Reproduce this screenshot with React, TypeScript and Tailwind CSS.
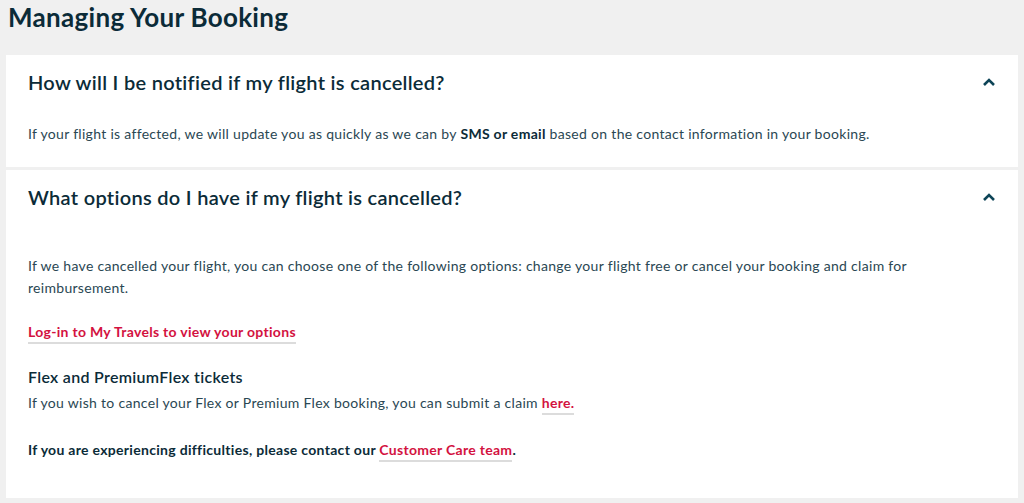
const Chevron = () => (
  <svg width="12" height="8" viewBox="0 0 12 8" className="shrink-0">
    <path d="M1 7 L6 2 L11 7" fill="none" stroke="#0d4457" strokeWidth="2.6" strokeLinejoin="miter" />
  </svg>
)

const Link = ({ children }: { children: React.ReactNode }) => (
  <a href="#" className="text-[#d3123f] font-bold border-b-2 border-[#dcdcdc] pb-[2px]">
    {children}
  </a>
)

export default function App() {
  return (
    <div
      className="min-h-[503px] bg-[#f0f0f0] pb-1 text-[#2a4753] tracking-[0.3px]"
      style={{ fontFamily: "Lato, 'Open Sans', sans-serif" }}
    >
      <h1 className="pl-2 pt-[1px] text-[26px] leading-[32px] font-bold text-[#0b2b38]">Managing Your Booking</h1>

      <div className="mx-[6px] mt-[22px] flex flex-col gap-[3px]">
        {/* question 1 */}
        <section className="bg-white px-[22px] pt-[13px] pb-[23px]">
          <div className="flex items-center justify-between pr-[1px]">
            <h2 className="text-[20px] leading-[28px] font-semibold text-[#0b2b38]">
              How will I be notified if my flight is cancelled?
            </h2>
            <Chevron />
          </div>
          <p className="mt-[28px] text-[14px] leading-[20px]">
            If your flight is affected, we will update you as quickly as we can by{" "}
            <strong className="font-bold text-[#0b2b38]">SMS or email</strong> based on the contact information in your
            booking.
          </p>
        </section>

        {/* question 2 */}
        <section className="bg-white px-[22px] pt-[13px] pb-[37px]">
          <div className="flex items-center justify-between pr-[1px]">
            <h2 className="text-[20px] leading-[28px] font-semibold text-[#0b2b38]">
              What options do I have if my flight is cancelled?
            </h2>
            <Chevron />
          </div>
          <p className="mt-[44px] text-[14px] leading-[22px] max-w-[900px]">
            If we have cancelled your flight, you can choose one of the following options: change your flight free or
            cancel your booking and claim for reimbursement.
          </p>
          <p className="mt-[22px] text-[14px] leading-[22px]">
            <Link>Log-in to My Travels to view your options</Link>
          </p>
          <h3 className="mt-[22px] text-[16px] leading-[24px] font-semibold text-[#0b2b38]">Flex and PremiumFlex tickets</h3>
          <p className="mt-[3px] text-[14px] leading-[22px]">
            If you wish to cancel your Flex or Premium Flex booking, you can submit a claim <Link>here.</Link>
          </p>
          <p className="mt-[25px] text-[14px] leading-[22px] font-bold text-[#0b2b38]">
            If you are experiencing difficulties, please contact our <Link>Customer Care team</Link>.
          </p>
        </section>
      </div>
    </div>
  )
}
